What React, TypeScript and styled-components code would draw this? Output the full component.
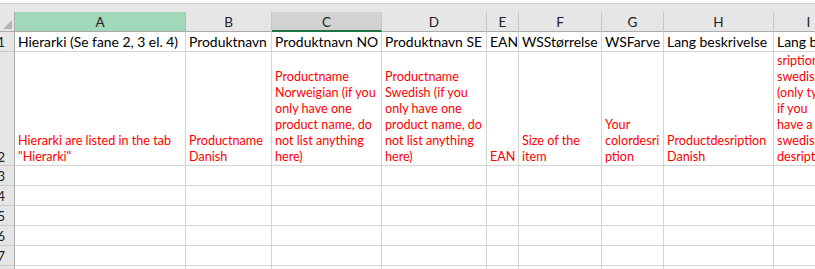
import React from 'react';
import styled, { createGlobalStyle } from 'styled-components';

const Global = createGlobalStyle`
  html, body { margin: 0; padding: 0; background: #fff; overflow: hidden; }
  body { font-family: Lato, "Liberation Sans", sans-serif; }
`;

const COLS = [171, 86, 110, 105, 32, 83, 62, 110, 70];
const LETTERS = ['A', 'B', 'C', 'D', 'E', 'F', 'G', 'H', 'I'];

const HEADERS = [
  'Hierarki (Se fane 2, 3 el. 4)',
  'Produktnavn',
  'Produktnavn NO',
  'Produktnavn SE',
  'EAN',
  'WSStørrelse',
  'WSFarve',
  'Lang beskrivelse',
  'Lang beskrivelse SE',
];

const NOTES = [
  'Hierarki are listed in the tab\n"Hierarki"',
  'Productname\nDanish',
  'Productname\nNorweigian (if you\nonly have one\nproduct name, do\nnot list anything\nhere)',
  'Productname\nSwedish (if you\nonly have one\nproduct name, do\nnot list anything\nhere)',
  'EAN',
  'Size of the\nitem',
  'Your\ncolordesri\nption',
  'Productdesription\nDanish',
  'Productde\nsription\nswedish\n(only type\nif you\nhave a\nswedish\ndesription)',
];

const Screen = styled.div`
  width: 815px;
  height: 269px;
  overflow: hidden;
  background: #e6e6e6;
`;

const FormulaEdge = styled.div`
  height: 3px;
  background: #fff;
  border-bottom: 1px solid #d0d0d0;
`;

const TopBand = styled.div`
  height: 8px;
  background: #e6e6e6;
`;

const Sheet = styled.div`
  display: grid;
  grid-template-columns: 15px ${COLS.map((c) => `${c}px`).join(' ')};
  grid-template-rows: 20px 20px 114px repeat(6, 20px);
  background: #fff;
`;

const Corner = styled.div`
  position: relative;
  background: #e6e6e6;
  border-right: 1px solid #ababab;
  border-bottom: 1px solid #ababab;
  &::after {
    content: '';
    position: absolute;
    right: 2px;
    bottom: 2px;
    width: 0;
    height: 0;
    border-left: 9px solid transparent;
    border-bottom: 9px solid #b4b4b4;
  }
`;

const ColHead = styled.div<{ $state?: 'selected' | 'hover' }>`
  display: flex;
  align-items: center;
  justify-content: center;
  box-sizing: border-box;
  background: ${(p) => (p.$state === 'selected' ? '#a0d8b9' : p.$state === 'hover' ? '#d2d2d2' : '#e6e6e6')};
  border-right: 1px solid ${(p) => (p.$state === 'selected' ? '#9fc7b0' : '#c8c8c8')};
  border-bottom: ${(p) => (p.$state === 'hover' ? '2px solid #217346' : '1px solid #ababab')};
  color: #222;
  font-size: 13.5px;
  overflow: hidden;
  padding-top: 1px;
`;

const RowHead = styled.div<{ $bottom?: boolean }>`
  display: flex;
  justify-content: flex-end;
  align-items: ${(p) => (p.$bottom ? 'flex-end' : 'center')};
  background: #e6e6e6;
  border-right: 1px solid #ababab;
  border-bottom: 1px solid #c8c8c8;
  color: #222;
  font-size: 13.5px;
  overflow: hidden;
  padding-right: 9px;
  line-height: 16px;
`;

const Cell = styled.div<{ $note?: boolean }>`
  display: flex;
  align-items: ${(p) => (p.$note ? 'flex-end' : 'center')};
  box-sizing: border-box;
  border-right: 1px solid #d4d4d4;
  border-bottom: 1px solid #d4d4d4;
  padding: 0 1px 0 3px;
  overflow: hidden;
  white-space: pre;
  color: ${(p) => (p.$note ? '#ff0000' : '#000')};
  font-size: ${(p) => (p.$note ? '12.6px' : '13.9px')};
  line-height: 16px;
`;

export default function App() {
  return (
    <Screen>
      <Global />
      <FormulaEdge />
      <TopBand />
      <Sheet>
        <Corner />
        {LETTERS.map((l, i) => (
          <ColHead key={l} $state={i === 0 ? 'selected' : i === 2 ? 'hover' : undefined}>
            {l}
          </ColHead>
        ))}

        <RowHead>1</RowHead>
        {HEADERS.map((h) => (
          <Cell key={h}>{h}</Cell>
        ))}

        <RowHead $bottom>2</RowHead>
        {NOTES.map((n, i) => (
          <Cell key={i} $note>
            {n}
          </Cell>
        ))}

        {[3, 4, 5, 6, 7, 8].map((r) => (
          <React.Fragment key={r}>
            <RowHead>{r}</RowHead>
            {COLS.map((_, i) => (
              <Cell key={i} />
            ))}
          </React.Fragment>
        ))}
      </Sheet>
    </Screen>
  );
}
